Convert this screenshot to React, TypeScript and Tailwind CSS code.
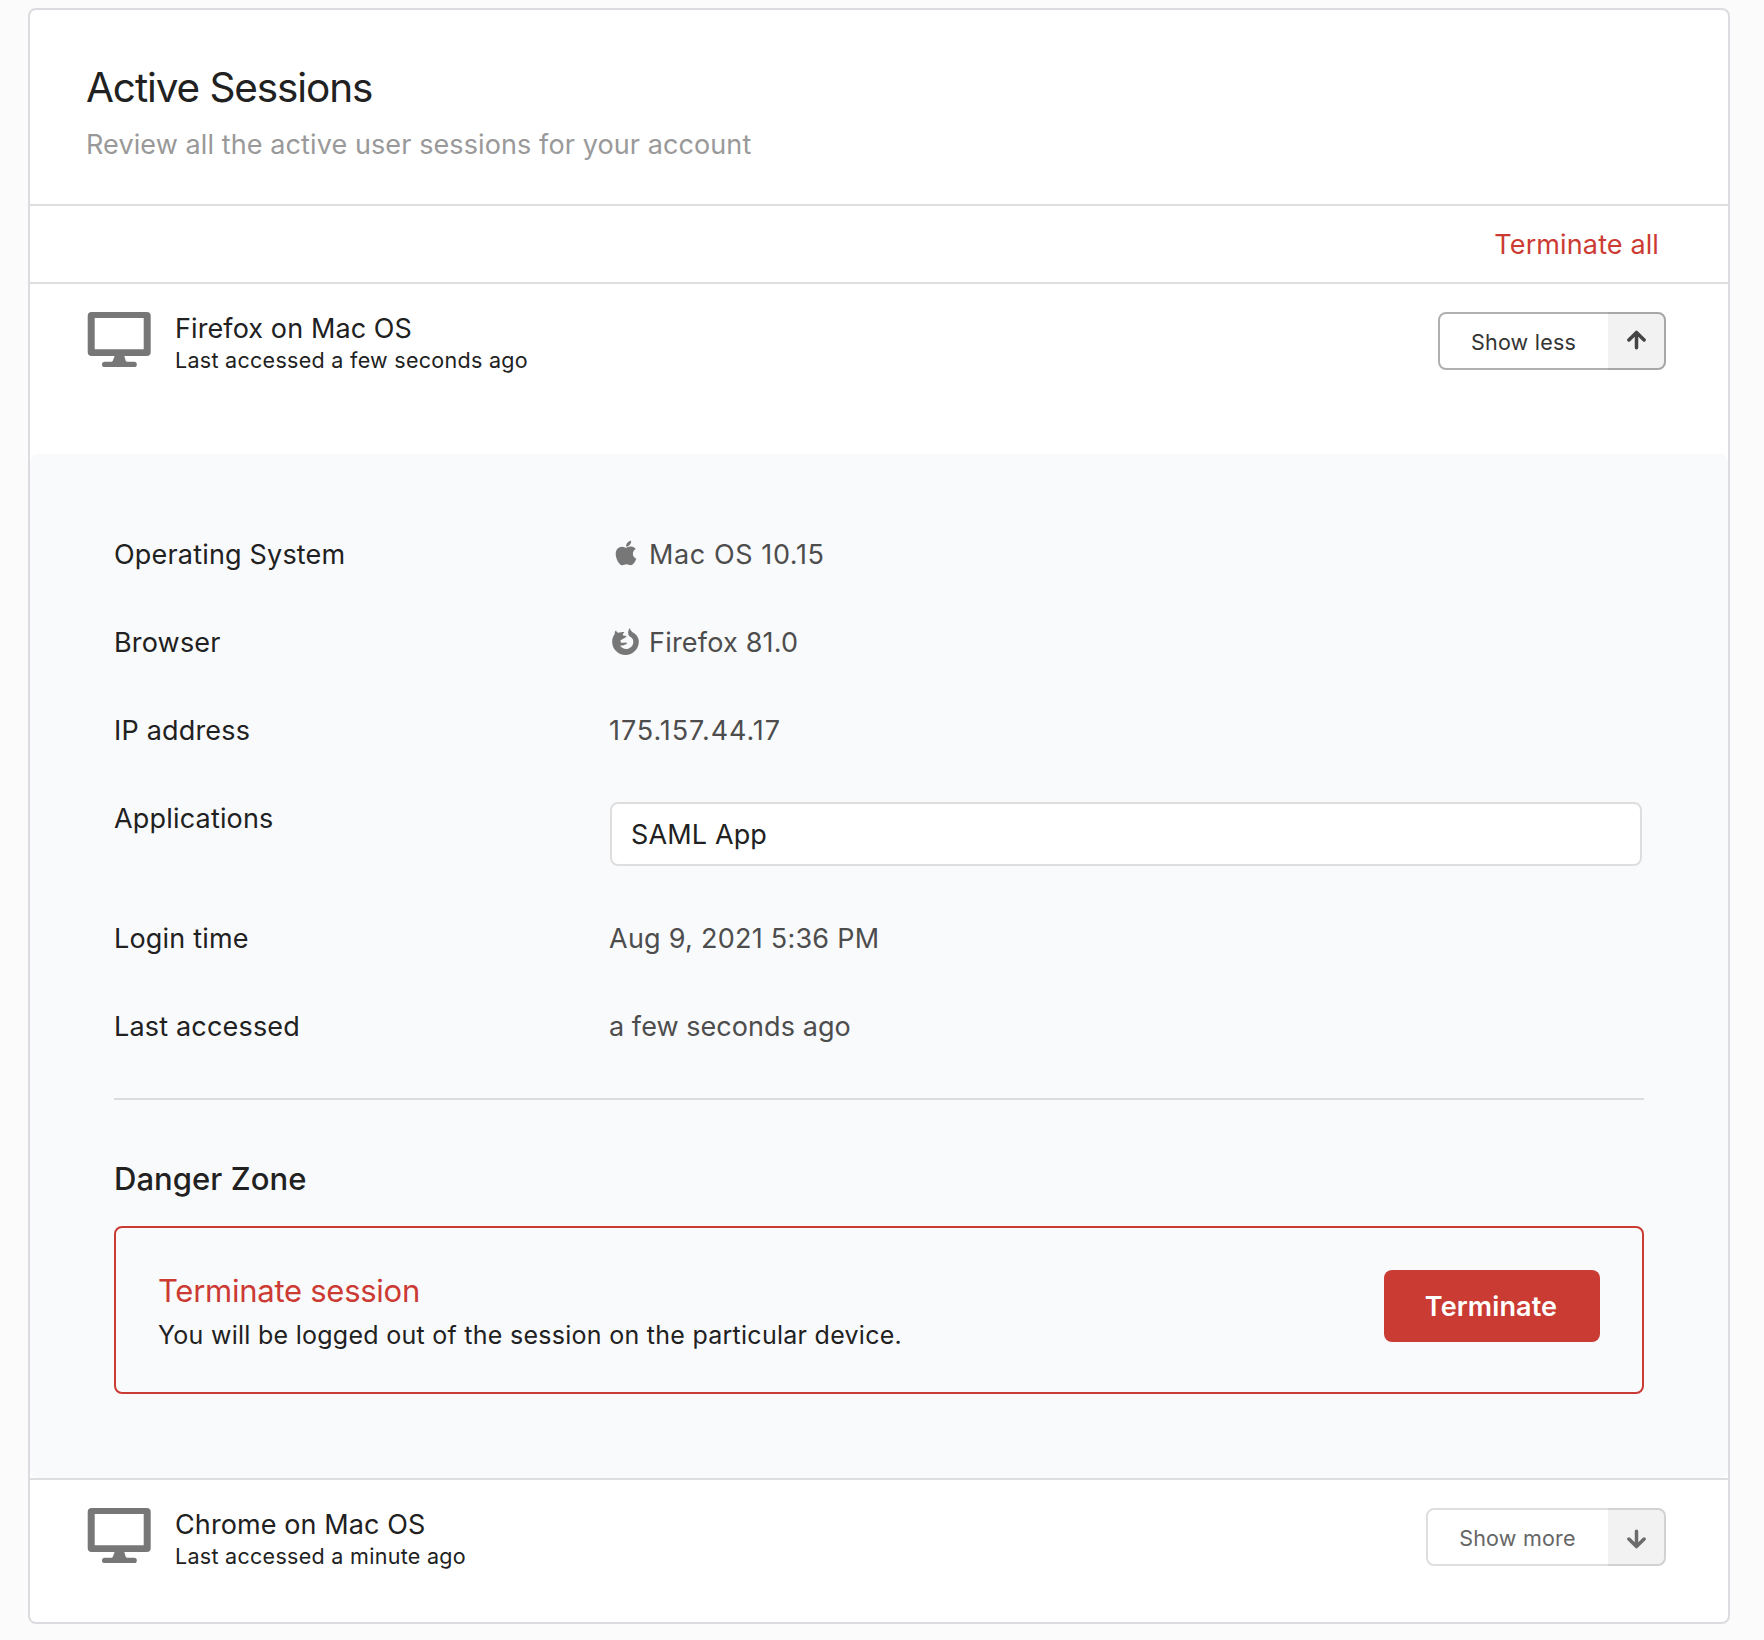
import React from "react";
import type { ReactNode } from "react";
import { FaApple } from "react-icons/fa";

function MonitorIcon() {
  return (
    <svg viewBox="0 0 64 56" className="h-14 w-16 shrink-0" fill="#777777">
      <path
        fillRule="evenodd"
        d="M4.7 0H59.7Q63.7 0 63.7 4V40Q63.7 44 59.7 44H37.3L38.6 48.6Q38.9 49.7 40 49.7H47.2Q49.8 49.7 49.8 52.4T47.2 55H17.8Q15 55 15 52.4T17.8 49.7H24.6Q25.7 49.7 26 48.6L27.6 44H4.7Q.7 44 .7 40V4Q.7 0 4.7 0ZM7.7 6V37.2H56.7V6Z"
      />
    </svg>
  );
}

function FirefoxIcon() {
  return (
    <svg viewBox="0 0 80 80" className="mr-[2px] mb-[3px] h-[27px] w-[27px]" fill="#777777">
      <path d="M12 7C13 12 15 14 19 14C24 13 29 12 37 12C33 16 31 19 33 22L43 24C42 28 38 30 33 32L25 37L26 43C31 45 37 42 42 43C46 44 45 48 40 49C36 50 33 53 24 52C28 60 38 64 46 62C55 60 62 53 63 44C64 36 61 31 55 27C49 23 47 18 48 11C49 6 51 3 53 0C54 6 57 9 62 13C73 19 80 29 79.500 41C79 63 62 80 40 80C18 80 .5 63 .5 41C.5 32 3 25 8 18C8 13 9 10 12 7Z" />
    </svg>
  );
}

function ArrowIcon({ down }: { down?: boolean }) {
  return (
    <svg
      viewBox="0 0 19 20"
      className={down ? "mt-[3px] mr-px h-5 w-[19px] rotate-180" : "mr-[2px] mb-[2px] h-5 w-[19px]"}
      fill="none"
      stroke={down ? "#6b6b6b" : "#444444"}
      strokeWidth="3.5"
      strokeLinecap="round"
      strokeLinejoin="round"
    >
      <path d="M1.900 10 9.500 2.400 17.100 10M9.500 3V17.800" />
    </svg>
  );
}

function ToggleButton({ open }: { open?: boolean }) {
  return (
    <button
      className={
        open
          ? "relative flex h-[58px] w-[228px] rounded-lg border-2 border-[#b0b0b0] bg-white pr-14 text-[#333333]"
          : "relative flex h-[58px] w-[240px] rounded-lg border-2 border-[#dedede] bg-white pr-14 text-[#666666]"
      }
    >
      <span className="flex-1 pt-px pr-px text-center text-[21.5px] leading-[54px] tracking-[0.22px]">
        {open ? "Show less" : "Show more"}
      </span>
      <span className="absolute -top-[2px] -right-[2px] -bottom-[2px] flex w-[58px] items-center justify-center rounded-r-lg bg-black/5">
        <ArrowIcon down={!open} />
      </span>
    </button>
  );
}

function SessionHeader({ name, accessed, open }: { name: string; accessed: string; open?: boolean }) {
  return (
    <div
      className={
        open
          ? "flex h-[170px] items-start pt-7 pr-[62px] pl-[57px]"
          : "flex h-[142px] items-start pt-7 pr-[62px] pl-[57px]"
      }
    >
      <MonitorIcon />
      <div className="ml-6 flex-1">
        <div className="text-[27px] leading-[34px] tracking-[0.1px]">{name}</div>
        <div className="-mt-[2px] text-[21.5px] leading-8 tracking-[0.29px]">{accessed}</div>
      </div>
      <ToggleButton open={open} />
    </div>
  );
}

function Row({ label, children }: { label: string; children: ReactNode }) {
  return (
    <div className="flex items-start text-[27px] leading-[34px]">
      <div className="w-[496px] shrink-0 tracking-[0.18px]">{label}</div>
      <div className="w-[1032px] text-[#4d4d4d]">{children}</div>
    </div>
  );
}

export default function App() {
  return (
    <div className="h-[1640px] w-[1764px] bg-[#fbfbfb] pt-2 pl-7 font-['Inter',sans-serif] text-[#212121]">
      <main className="w-[1702px] rounded-lg border-2 border-[#dcdce0] bg-white">
        <header className="h-[196px] border-b-2 border-[#dedede] pt-[54px] pl-14">
          <h1 className="text-[40.5px] leading-[48px] tracking-[-1.1px]">Active Sessions</h1>
          <p className="mt-[17px] text-[27px] leading-8 tracking-[0.1px] text-[#999999]">
            Review all the active user sessions for your account
          </p>
        </header>
        <div className="flex h-[78px] items-center justify-end border-b-2 border-[#dedede] pt-[2px] pr-[69px]">
          <button className="text-[27px] leading-8 tracking-[0.12px] text-[#cc3b33]">Terminate all</button>
        </div>

        <SessionHeader open name="Firefox on Mac OS" accessed="Last accessed a few seconds ago" />

        <section className="rounded-lg bg-[#f9fafc] px-[84px] py-[84px]">
          <div className="flex flex-col gap-[54px]">
            <Row label="Operating System">
              <div className="flex items-center">
                <span className="mr-[7px] flex w-8 justify-center">
                  <FaApple className="mb-1 h-7 w-7 text-[#777777]" />
                </span>
                <span className="tracking-[0.6px]">Mac OS 10.15</span>
              </div>
            </Row>
            <Row label="Browser">
              <div className="flex items-center">
                <span className="mr-[7px] flex w-8 justify-center">
                  <FirefoxIcon />
                </span>
                <span className="tracking-[0.2px]">Firefox 81.0</span>
              </div>
            </Row>
            <Row label="IP address">
              <span className="-ml-px tracking-[0.93px]">175.157.44.17</span>
            </Row>
            <Row label="Applications">
              <div className="mb-[2px] h-16 rounded-lg border-2 border-[#dedede] bg-white pl-[19px] leading-[62px] tracking-[0.14px] text-[#212121]">
                SAML App
              </div>
            </Row>
            <Row label="Login time">
              <span className="-ml-px tracking-[0.25px]">Aug 9, 2021 5:36 PM</span>
            </Row>
            <Row label="Last accessed">
              <span className="-ml-px tracking-[0.06px]">a few seconds ago</span>
            </Row>
          </div>
          <div className="mt-[54px] h-[2px] bg-[#dbdcdd]" />
          <h2 className="mt-[60px] text-[31px] leading-[38px] font-medium tracking-[0.06px]">Danger Zone</h2>
          <div className="mt-7 flex h-[168px] items-start justify-between rounded-lg border-2 border-[#ca3b33] px-[42px]">
            <div className="pt-[45px]">
              <h3 className="text-[31px] leading-9 tracking-[-0.26px] text-[#cc3b33]">Terminate session</h3>
              <p className="mt-[10px] text-[25px] leading-8 tracking-[0.27px]">
                You will be logged out of the session on the particular device.
              </p>
            </div>
            <button className="mt-[42px] h-[72px] w-[216px] rounded-lg bg-[#ca3b33] pt-[2px] pr-[2px] text-[27px] leading-8 font-semibold tracking-[0.12px] text-white">
              Terminate
            </button>
          </div>
        </section>

        <div className="border-t-2 border-[#dedede]">
          <SessionHeader name="Chrome on Mac OS" accessed="Last accessed a minute ago" />
        </div>
      </main>
    </div>
  );
}
